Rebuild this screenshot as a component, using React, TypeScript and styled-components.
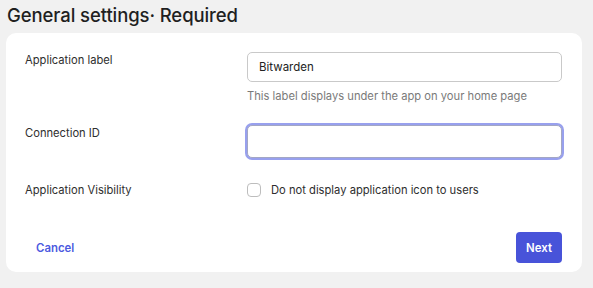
import React from "react";
import styled, { createGlobalStyle } from "styled-components";

const Global = createGlobalStyle`
  html, body { margin: 0; padding: 0; background: #f1f1f1; }
  body { font-family: Inter, "Noto Sans", sans-serif; color: #2b2b2b; }
  * { box-sizing: border-box; }
`;

const Page = styled.div`
  width: 593px;
  height: 288px;
  padding: 2px 11px 0 6px;
`;

const Title = styled.h1`
  margin: 0 0 0 1px;
  height: 31px;
  font-size: 18.5px;
  font-weight: 500;
  line-height: 26px;
  color: #1f1f1f;
  letter-spacing: -0.1px;
`;

const Card = styled.div`
  background: #fff;
  border-radius: 10px;
  height: 239px;
  padding: 19px 20px 9px 19px;
  display: flex;
  flex-direction: column;
`;

const Row = styled.div<{ $top?: number }>`
  display: grid;
  grid-template-columns: 222px 1fr;
  align-items: start;
  margin-top: ${(p) => p.$top ?? 0}px;
`;

const Label = styled.div`
  font-size: 11.2px;
  line-height: 16px;
  color: #2e2e2e;
`;

const Input = styled.input<{ $focused?: boolean }>`
  display: block;
  width: 100%;
  height: ${(p) => (p.$focused ? 33 : 30)}px;
  border: 1px solid ${(p) => (p.$focused ? "#a3a7c4" : "#c9c9c9")};
  border-radius: 5px;
  padding: 0 11px;
  font-family: Inter, sans-serif;
  font-size: 11.5px;
  color: #222;
  outline: none;
  background: #fff;
  box-shadow: ${(p) => (p.$focused ? "0 0 0 2px #98a0ee" : "none")};
`;

const Help = styled.div`
  margin-top: 7px;
  font-size: 11.2px;
  line-height: 14px;
  color: #7a7a7a;
`;

const CheckLine = styled.label`
  display: flex;
  align-items: center;
  gap: 10px;
  font-size: 11.2px;
  line-height: 16px;
  color: #2e2e2e;
`;

const Box = styled.span`
  width: 14px;
  height: 14px;
  border: 1px solid #bdbdbd;
  border-radius: 4px;
  background: #fff;
  flex: none;
`;

const Footer = styled.div`
  margin-top: auto;
  display: flex;
  justify-content: space-between;
  align-items: center;
`;

const CancelButton = styled.button`
  border: none;
  background: none;
  padding: 0 11px;
  font-family: Inter, sans-serif;
  font-size: 11.4px;
  font-weight: 600;
  color: #4c5adf;
  cursor: pointer;
`;

const NextButton = styled.button`
  border: none;
  background: #4853d9;
  color: #fff;
  border-radius: 4px;
  width: 46px;
  height: 31px;
  padding: 0;
  font-family: Inter, sans-serif;
  font-size: 11.4px;
  font-weight: 600;
  cursor: pointer;
`;

export default function App() {
  return (
    <Page>
      <Global />
      <Title>General settings· Required</Title>
      <Card>
        <Row>
          <Label>Application label</Label>
          <div>
            <Input defaultValue="Bitwarden" />
            <Help>This label displays under the app on your home page</Help>
          </div>
        </Row>
        <Row $top={22}>
          <Label>Connection ID</Label>
          <Input $focused />
        </Row>
        <Row $top={24}>
          <Label>Application Visibility</Label>
          <CheckLine>
            <Box />
            Do not display application icon to users
          </CheckLine>
        </Row>
        <Footer>
          <CancelButton>Cancel</CancelButton>
          <NextButton>Next</NextButton>
        </Footer>
      </Card>
    </Page>
  );
}
